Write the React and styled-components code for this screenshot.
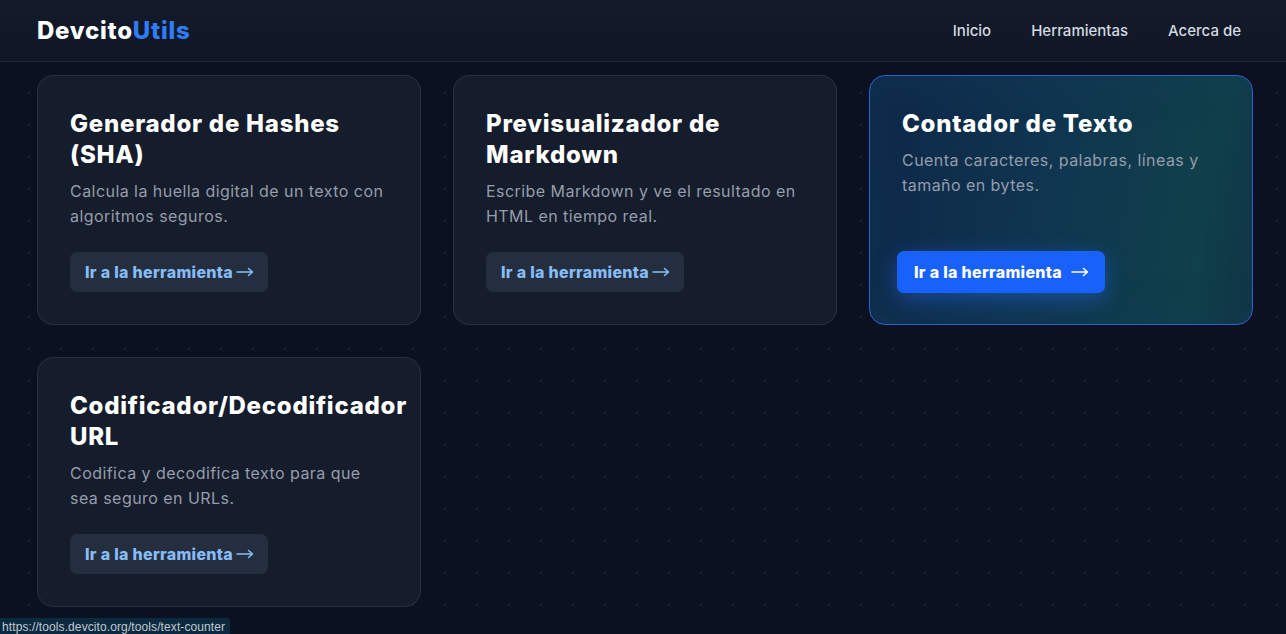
import React from "react";
import styled, { createGlobalStyle, css } from "styled-components";

const Global = createGlobalStyle`
  html, body { margin: 0; padding: 0; }
  body {
    background-color: #0b1120;
    background-image: radial-gradient(circle, #1b2232 1px, transparent 1.4px);
    background-size: 32px 32px;
    background-position: 13px 13px;
    font-family: Inter, "Noto Sans", sans-serif;
    color: #fff;
    min-height: 634px;
    overflow: hidden;
  }
`;

const Header = styled.header`
  height: 62px;
  border-bottom: 1px solid #1e2636;
  background: linear-gradient(180deg, #131a2a 0%, #0f1626 100%);
  display: flex;
  align-items: center;
  justify-content: space-between;
  padding: 0 45px 0 37px;
  box-sizing: border-box;
`;

const Logo = styled.div`
  font-size: 24px;
  font-weight: 800;
  letter-spacing: 0.75px;
  color: #fff;
`;

const LogoAccent = styled.span`
  color: #2f7df6;
`;

const Nav = styled.nav`
  display: flex;
  gap: 40px;
`;

const NavLink = styled.a`
  font-size: 15px;
  font-weight: 500;
  color: #d5d9e0;
  text-decoration: none;
`;

const Main = styled.main`
  padding: 13px 33px 0 37px;
`;

const Grid = styled.div`
  display: grid;
  grid-template-columns: repeat(3, 384px);
  grid-auto-rows: 250px;
  gap: 32px;
`;

const Card = styled.div`
  box-sizing: border-box;
  border-radius: 16px;
  border: 1px solid #283142;
  background: #151c2b;
  padding: 32px 32px 32px;
  display: flex;
  flex-direction: column;
  align-items: flex-start;
  ${(p) =>
    p.$active &&
    css`
      border-color: #2a62d6;
      background: linear-gradient(100deg, #0e2748 0%, #0f3550 45%, #10404a 85%, #0f3342 100%);
      box-shadow: inset 0 0 40px rgba(20, 60, 90, 0.5);
    `}
`;

const Title = styled.h2`
  margin: 0 0 9px;
  font-size: 24px;
  line-height: 31px;
  font-weight: 800;
  letter-spacing: 0.75px;
  color: #fff;
`;

const Desc = styled.p`
  margin: 0 0 24px;
  font-size: 16px;
  line-height: 24.5px;
  letter-spacing: 0.45px;
  color: #959cab;
  max-width: 320px;
`;

const Button = styled.a`
  margin-top: auto;
  box-sizing: border-box;
  height: 40px;
  padding: 0 14px 0 15px;
  border-radius: 7px;
  display: inline-flex;
  align-items: center;
  font-size: 16px;
  font-weight: 800;
  letter-spacing: 0.3px;
  text-decoration: none;
  background: #252e3f;
  color: #86bdf8;
  ${(p) =>
    p.$active &&
    css`
      height: 42px;
      padding: 0 16px 0 17px;
      margin-left: -5px;
      margin-bottom: -1px;
      background: #1862fb;
      color: #fff;
      box-shadow: 0 6px 22px rgba(37, 110, 255, 0.45);
    `}
`;

const ArrowIcon = styled.svg`
  margin-left: ${(p) => (p.$active ? "9px" : "3px")};
  flex: none;
`;

const Arrow = ({ active }) => (
  <ArrowIcon $active={active} width="18" height="10" viewBox="0 0 18 10" fill="none">
    <path d="M1 5h15.5M12.5 1.5L16.5 5l-4 3.5" stroke="currentColor" strokeWidth="1.5" strokeLinecap="round" strokeLinejoin="round" />
  </ArrowIcon>
);

const StatusBar = styled.div`
  position: fixed;
  left: 0;
  bottom: 0;
  height: 16px;
  padding: 0 5px 0 2px;
  background: #0c2a3f;
  border-top-right-radius: 3px;
  color: #c3c9d0;
  font-family: "Liberation Sans", Arial, sans-serif;
  font-size: 12px;
  letter-spacing: 0.1px;
  line-height: 18px;
  overflow: hidden;
`;

const tools = [
  {
    title: "Generador de Hashes (SHA)",
    desc: "Calcula la huella digital de un texto con algoritmos seguros.",
  },
  {
    title: "Previsualizador de Markdown",
    desc: "Escribe Markdown y ve el resultado en HTML en tiempo real.",
  },
  {
    title: "Contador de Texto",
    desc: "Cuenta caracteres, palabras, líneas y tamaño en bytes.",
    active: true,
  },
  {
    title: "Codificador/Decodificador URL",
    desc: "Codifica y decodifica texto para que sea seguro en URLs.",
  },
];

export default function App() {
  return (
    <>
      <Global />
      <Header>
        <Logo>
          Devcito<LogoAccent>Utils</LogoAccent>
        </Logo>
        <Nav>
          <NavLink href="#">Inicio</NavLink>
          <NavLink href="#">Herramientas</NavLink>
          <NavLink href="#">Acerca de</NavLink>
        </Nav>
      </Header>
      <Main>
        <Grid>
          {tools.map((t) => (
            <Card key={t.title} $active={t.active}>
              <Title>{t.title}</Title>
              <Desc>{t.desc}</Desc>
              <Button href="#" $active={t.active}>
                Ir a la herramienta
                <Arrow active={t.active} />
              </Button>
            </Card>
          ))}
        </Grid>
      </Main>
      <StatusBar>https://tools.devcito.org/tools/text-counter</StatusBar>
    </>
  );
}
